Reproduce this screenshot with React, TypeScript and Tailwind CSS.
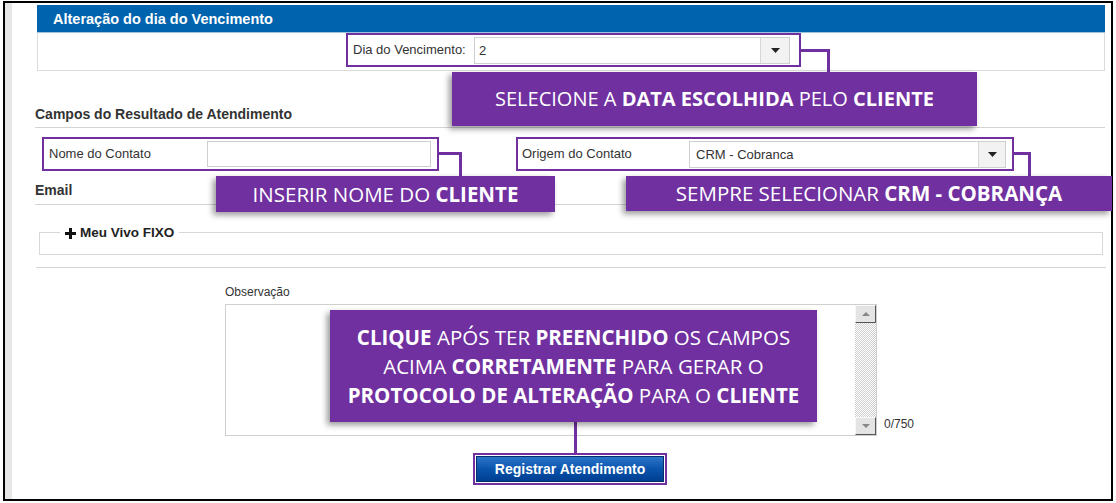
import React from "react";

const Caret = () => (
  <svg width="9" height="5" viewBox="0 0 9 5"><path d="M0 0H9L4.5 5Z" fill="#222" /></svg>
);

const Callout = ({ className, children }: { className: string; children: React.ReactNode }) => (
  <div
    className={`absolute bg-[#7030a0] text-white flex items-center justify-center text-center shadow-[-3px_3px_6px_rgba(0,0,0,0.4)] ${className}`}
    style={{ fontFamily: '"Open Sans", "Noto Sans", sans-serif' }}
  >
    {children}
  </div>
);

export default function App() {
  return (
    <div
      className="relative w-[1116px] h-[503px] bg-white pt-[1px] pl-[3px] text-[#333]"
      style={{ fontFamily: '"Liberation Sans", Arial, sans-serif' }}
    >
      <div className="flex w-[1110px] h-[500px] border-2 border-black">
        <div className="w-[7px] bg-[#e6e6e6]" />
        <div className="flex-1 flex flex-col">
          {/* Panel */}
          <div className="ml-[25px] mt-[2px] w-[1068px]">
            <div className="h-[28px] bg-[#0063ad] border-b border-[#9cc3e0] flex items-center pl-[16px] pt-[3px] text-white font-bold text-[14.5px]">
              Alteração do dia do Vencimento
            </div>
            <div className="h-[38px] border border-t-0 border-[#dcdcdc]">
              <div className="ml-[308px] w-[455px] h-[34px] border-2 border-[#7030a0] flex items-center">
                <div className="w-[126px] pl-[5px] text-[13px]">Dia do Vencimento:</div>
                <div className="w-[316px] h-[27px] border border-[#cfcfcf] flex">
                  <div className="flex-1 pl-[4px] text-[13px] leading-[25px]">2</div>
                  <div className="w-[29px] bg-[#f2f2f2] border-l border-[#d6d6d6] flex items-center justify-center">
                    <Caret />
                  </div>
                </div>
              </div>
            </div>
          </div>

          {/* Campos */}
          <div className="ml-[23px] mt-[35px] w-[1070px] pb-[5px] border-b border-[#d4d4d4]">
            <div className="h-[16px] leading-[16px] font-bold text-[14px]">Campos do Resultado de Atendimento</div>
          </div>

          <div className="flex mt-[9px]">
            <div className="ml-[30px] w-[397px] h-[34px] border-2 border-[#7030a0] flex items-center">
              <div className="w-[163px] pl-[5px] text-[13px]">Nome do Contato</div>
              <div className="w-[224px] h-[26px] border border-[#cfcfcf]" />
            </div>
            <div className="ml-[77px] w-[498px] h-[34px] border-2 border-[#7030a0] flex items-center">
              <div className="w-[171px] pl-[4px] text-[13px]">Origem do Contato</div>
              <div className="w-[317px] h-[27px] border border-[#cfcfcf] flex">
                <div className="flex-1 pl-[6px] text-[13px] leading-[25px]">CRM - Cobranca</div>
                <div className="w-[27px] bg-[#f2f2f2] border-l border-[#d6d6d6] flex items-center justify-center">
                  <Caret />
                </div>
              </div>
            </div>
          </div>

          <div className="ml-[23px] mt-[11px] w-[1070px] pb-[6px] border-b border-[#d4d4d4]">
            <div className="h-[16px] leading-[16px] font-bold text-[14px]">Email</div>
          </div>

          {/* Meu Vivo FIXO */}
          <div className="relative ml-[27px] mt-[27px] w-[1064px] h-[23px] border border-[#d8d8d8]">
            <div className="absolute left-[20px] -top-[8px] bg-white px-[5px] flex items-center gap-[4px] h-[16px]">
              <svg width="11" height="11" viewBox="0 0 11 11">
                <path d="M4 0H7V4H11V7H7V11H4V7H0V4H4Z" fill="#111" />
              </svg>
              <span className="font-bold text-[13.5px] text-[#222] leading-[16px]">Meu Vivo FIXO</span>
            </div>
          </div>

          <div className="ml-[24px] mt-[12px] w-[1070px] border-t border-[#d4d4d4]" />

          {/* Observação */}
          <div className="ml-[213px] mt-[17px] h-[14px] leading-[14px] text-[12px]">Observação</div>
          <div className="ml-[213px] mt-[5px] flex items-end gap-[7px]">
            <div className="w-[652px] h-[132px] border border-[#cfcfcf] flex justify-end">
              <div className="w-[21px] flex flex-col">
                <div className="h-[18px] bg-[#e4e4e4] border border-[#f8f8f8] border-r-[#555] border-b-[#555] flex items-center justify-center">
                  <svg width="8" height="4" viewBox="0 0 8 4"><path d="M0 4H8L4 0Z" fill="#888" /></svg>
                </div>
                <div className="flex-1 bg-[repeating-conic-gradient(#cfcfcf_0%_25%,#ffffff_0%_50%)] bg-[length:2px_2px]" />
                <div className="h-[18px] bg-[#e4e4e4] border border-[#f8f8f8] border-r-[#555] border-b-[#555] flex items-center justify-center">
                  <svg width="8" height="4" viewBox="0 0 8 4"><path d="M0 0H8L4 4Z" fill="#888" /></svg>
                </div>
              </div>
            </div>
            <div className="text-[12px] leading-[14px] mb-[5px]">0/750</div>
          </div>

          <div className="ml-[461px] mt-[17px] w-[194px] h-[32px] border-2 border-[#7030a0] p-[1px]">
            <div className="h-full border border-[#002f6c] bg-gradient-to-b from-[#2a74c9] via-[#0a54ad] to-[#003f92] flex items-center justify-center text-white font-bold text-[14px]">
              Registrar Atendimento
            </div>
          </div>
        </div>
      </div>

      {/* connectors */}
      <div className="absolute left-[801px] top-[49px] w-[29px] h-[3px] bg-[#7030a0]" />
      <div className="absolute left-[827px] top-[49px] w-[3px] h-[24px] bg-[#7030a0]" />
      <div className="absolute left-[439px] top-[152px] w-[23px] h-[3px] bg-[#7030a0]" />
      <div className="absolute left-[459px] top-[152px] w-[3px] h-[25px] bg-[#7030a0]" />
      <div className="absolute left-[1013px] top-[152px] w-[18px] h-[3px] bg-[#7030a0]" />
      <div className="absolute left-[1028px] top-[152px] w-[3px] h-[25px] bg-[#7030a0]" />
      <div className="absolute left-[574px] top-[421px] w-[3px] h-[33px] bg-[#7030a0]" />

      <Callout className="left-[452px] top-[72px] w-[525px] h-[54px] text-[20px]">
        <span>
          SELECIONE A <b>DATA ESCOLHIDA</b> PELO <b>CLIENTE</b>
        </span>
      </Callout>
      <Callout className="left-[216px] top-[176px] w-[339px] h-[36px] text-[20.5px]">
        <span>
          INSERIR NOME DO <b>CLIENTE</b>
        </span>
      </Callout>
      <Callout className="left-[626px] top-[176px] w-[486px] h-[35px] text-[20.5px]">
        <span>
          SEMPRE SELECIONAR <b>CRM - COBRANÇA</b>
        </span>
      </Callout>
      <Callout className="left-[330px] top-[310px] w-[487px] h-[112px] text-[20.5px] leading-[29px]">
        <span>
          <b>CLIQUE</b> APÓS TER <b>PREENCHIDO</b> OS CAMPOS
          <br />
          ACIMA <b>CORRETAMENTE</b> PARA GERAR O
          <br />
          <b>PROTOCOLO DE ALTERAÇÃO</b> PARA O <b>CLIENTE</b>
        </span>
      </Callout>
    </div>
  );
}
